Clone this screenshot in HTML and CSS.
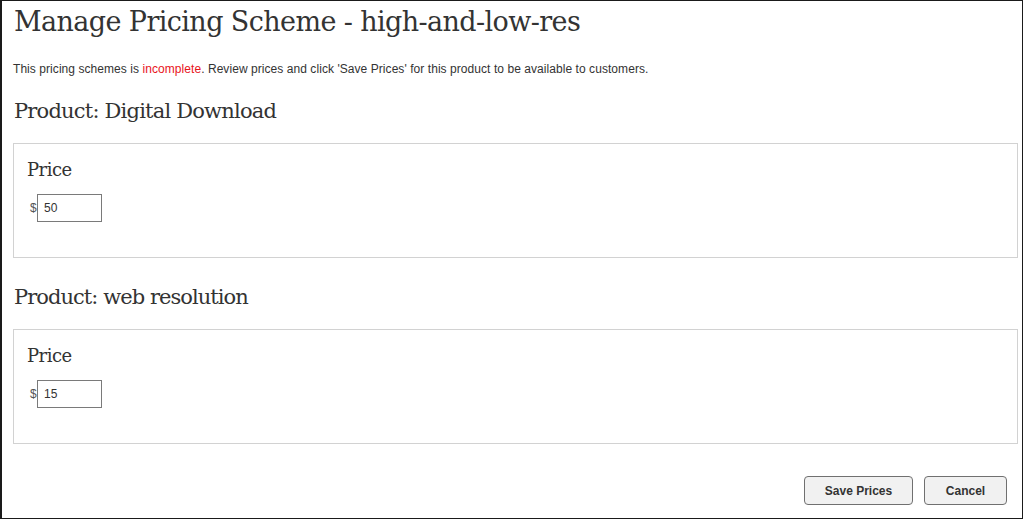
FILE: index.html
```html
<!DOCTYPE html>
<html>
<head>
<meta charset="utf-8">
<link rel="stylesheet" href="styles.css">
</head>
<body>
<div class="frame">
  <h1 class="title">Manage Pricing Scheme - high-and-low-res</h1>
  <p class="notice">This pricing schemes is <span class="warn">incomplete</span>. Review prices and click 'Save Prices' for this product to be available to customers.</p>

  <h2 class="product">Product: Digital Download</h2>
  <div class="box">
    <h3 class="price-label">Price</h3>
    <div class="price-row"><span class="currency">$</span><input class="price-input" type="text" value="50"></div>
  </div>

  <h2 class="product second">Product: web resolution</h2>
  <div class="box">
    <h3 class="price-label">Price</h3>
    <div class="price-row"><span class="currency">$</span><input class="price-input" type="text" value="15"></div>
  </div>

  <div class="actions">
    <button class="btn btn-save">Save Prices</button>
    <button class="btn btn-cancel">Cancel</button>
  </div>
</div>
</body>
</html>
```
FILE: styles.css
```css
html, body {
  margin: 0;
  padding: 0;
  background: #fff;
}
.frame {
  box-sizing: border-box;
  width: 1023px;
  height: 519px;
  border-style: solid;
  border-color: #1a1a1a;
  border-width: 1px 1px 1px 2px;
  padding: 0 4px 0 11px;
  font-family: "Liberation Sans", Arial, sans-serif;
  color: #333;
}
.title {
  margin: 3px 0 0 1px;
  font-family: "DejaVu Serif", Georgia, serif;
  font-weight: normal;
  font-size: 27px;
  line-height: 36px;
  color: #333;
  letter-spacing: -0.6px;
}
.notice {
  margin: 21px 0 0 0;
  font-size: 12px;
  line-height: 16px;
  color: #333;
  letter-spacing: 0.06px;
}
.warn { color: #e8141c; }
.product {
  margin: 20px 0 0 1px;
  font-family: "DejaVu Serif", Georgia, serif;
  font-weight: normal;
  font-size: 21px;
  line-height: 28px;
  color: #333;
  letter-spacing: -0.8px;
}
.product.second { margin-top: 25px; letter-spacing: -0.95px; }
.box {
  margin-top: 18px;
  box-sizing: border-box;
  height: 115px;
  border: 1px solid #d2d2d2;
  padding: 14px 13px 0 13px;
}
.price-label {
  margin: 0;
  font-family: "DejaVu Serif", Georgia, serif;
  font-weight: normal;
  font-size: 18px;
  line-height: 24px;
  color: #333;
  letter-spacing: -0.5px;
}
.price-row {
  display: flex;
  align-items: center;
  margin-top: 12px;
  padding-left: 3px;
}
.currency {
  font-size: 12px;
  color: #555;
  width: 7px;
}
.price-input {
  box-sizing: border-box;
  width: 65px;
  height: 28px;
  margin: 0;
  border: 1px solid #7a7a7a;
  padding: 0 6px;
  font-family: "Liberation Sans", Arial, sans-serif;
  font-size: 12px;
  color: #333;
  outline: none;
}
.actions {
  display: flex;
  justify-content: flex-end;
  gap: 11px;
  margin-top: 32px;
  padding-right: 11px;
}
.btn {
  box-sizing: border-box;
  height: 29px;
  border: 1px solid #707070;
  border-radius: 4px;
  background: #f1f1f1;
  font-family: "Liberation Sans", Arial, sans-serif;
  font-weight: bold;
  font-size: 12px;
  color: #333;
  padding: 0;
}
.btn-save { width: 109px; }
.btn-cancel { width: 83px; }
```
